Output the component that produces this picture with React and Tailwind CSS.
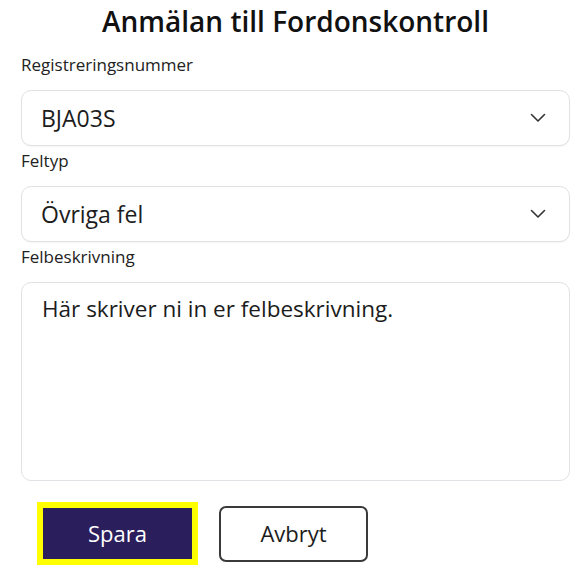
import { useState } from "react";

const font = { fontFamily: '"Open Sans", "Noto Sans", sans-serif' };

function Chevron() {
  return (
    <svg width="16" height="10" viewBox="0 0 16 10" fill="none">
      <path d="M1.5 1.5 L8 8 L14.5 1.5" stroke="#333" strokeWidth="1.6" strokeLinecap="round" strokeLinejoin="round" />
    </svg>
  );
}

function Field({ label, children }) {
  return (
    <div>
      <div className="h-[40px] pt-[3px] text-[17px] leading-6 text-[#222]">{label}</div>
      {children}
    </div>
  );
}

function SelectBox({ value }) {
  return (
    <div className="h-[56px] rounded-[10px] border border-[#e1e1e6] bg-white flex items-center justify-between pl-[19px] pr-[23px] shadow-[0_1px_1px_rgba(0,0,0,0.04)]">
      <span className="text-[23px] text-[#1c1c1c]">{value}</span>
      <Chevron />
    </div>
  );
}

export default function App() {
  const [text, setText] = useState("Här skriver ni in er felbeskrivning.");

  return (
    <div className="w-[582px] h-[583px] bg-white pl-[21px] pr-[12px]" style={font}>
      <h1 className="h-[50px] pt-[1px] text-center text-[28px] leading-[40px] font-semibold text-[#111]">
        Anmälan till Fordonskontroll
      </h1>

      <Field label="Registreringsnummer">
        <SelectBox value="BJA03S" />
      </Field>

      <Field label="Feltyp">
        <SelectBox value="Övriga fel" />
      </Field>

      <Field label="Felbeskrivning">
        <textarea
          value={text}
          onChange={(e) => setText(e.target.value)}
          className="block w-full h-[199px] resize-none rounded-[10px] border border-[#e1e1e6] bg-white pl-[20px] pr-4 pt-[10px] text-[22.5px] leading-8 text-[#1c1c1c] outline-none"
        />
      </Field>

      <div className="flex items-center gap-[21px] pt-[21px] pl-[16px]">
        <div className="border-[6px] border-[#ffff00]">
          <button className="w-[149px] h-[51px] bg-[#2a1e5d] text-white text-[22px]">
            Spara
          </button>
        </div>
        <button className="w-[149px] h-[56px] rounded-[7px] border-2 border-[#3a3a3a] bg-white text-[22px] text-[#1c1c1c]">
          Avbryt
        </button>
      </div>
    </div>
  );
}
